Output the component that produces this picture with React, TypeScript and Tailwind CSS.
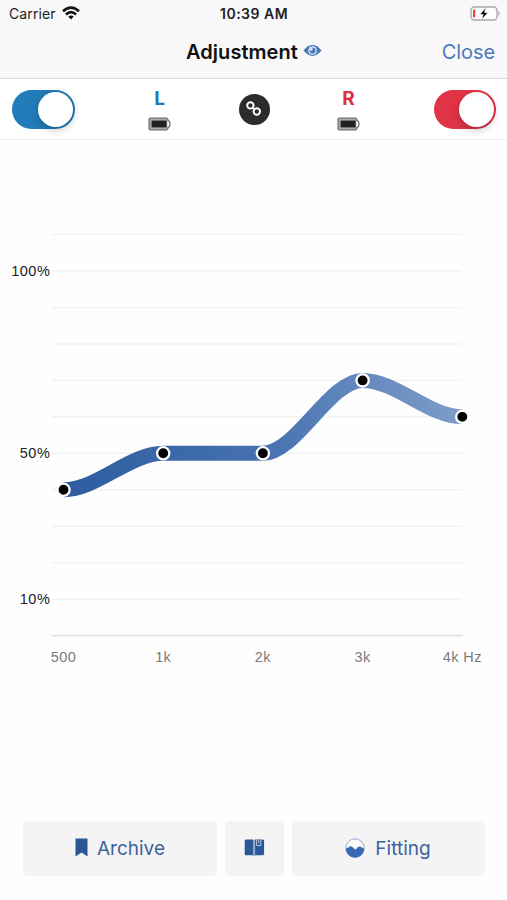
import { useState } from 'react';

interface Point {
  label: string;
  value: number;
}

const POINTS: Point[] = [
  { label: '500', value: 40 },
  { label: '1k', value: 50 },
  { label: '2k', value: 50 },
  { label: '3k', value: 70 },
  { label: '4k Hz', value: 60 },
];

const GRID_VALUES = [110, 100, 90, 80, 70, 60, 50, 40, 30, 20, 10, 0];
const LABELED_VALUES = [100, 50, 10];

const getX = (index: number) => 63.5 + index * 99.7;
const getY = (value: number) => 495.6 - value * 3.646;

// Flat tangents at every point keep the line from overshooting
const getCurve = (points: Point[]) =>
  points
    .map((point, i) => {
      const x = getX(i);
      const y = getY(point.value);
      if (i === 0) return `M${x} ${y}`;
      const prevX = getX(i - 1);
      const third = (x - prevX) / 3;
      return `C${prevX + third} ${getY(points[i - 1].value)} ${x - third} ${y} ${x} ${y}`;
    })
    .join(' ');

function StatusBar() {
  return (
    <div className="relative flex h-7 items-center justify-between pl-[9px] pr-[6px] text-[#222]">
      <div className="flex items-center gap-[6px]">
        <span className="-mt-[2px] text-[14px] tracking-[0.1px]">Carrier</span>
        <svg width="18" height="14" viewBox="0 0 18 14" fill="none" stroke="#111" strokeWidth="2.6" className="-mt-[2px]">
          <path d="M1 5.2Q9 -1.9 17 5.2" />
          <path d="M3.9 8.4Q9 4 14.1 8.4" />
          <path d="M6.3 10.6Q9 8.4 11.7 10.6L9 13.5Z" fill="#111" stroke="none" />
        </svg>
      </div>
      <span className="absolute left-[220px] top-[4px] whitespace-nowrap text-[14px] font-semibold leading-5 tracking-[0.5px]">
        10:39 AM
      </span>
      <svg width="31" height="15" viewBox="0 0 31 15" className="-mt-[2px]">
        <rect x="1" y="1" width="26" height="13" rx="3.5" fill="#fdfdfd" stroke="#a5a5a5" strokeWidth="1.3" />
        <path d="M28.3 5q2.6 2.5 0 5z" fill="#a5a5a5" />
        <rect x="3" y="3.5" width="2.2" height="8" rx="0.8" fill="#f04438" />
        <path d="M15.8 1.5L10 8.5h3.2L12 13.5l5.8-7h-3.3z" fill="#000" stroke="#f9f9f9" strokeWidth="0.6" />
      </svg>
    </div>
  );
}

function NavBar() {
  return (
    <div className="relative flex h-[50px] items-center justify-end pb-[2px] pr-[12px]">
      <div className="absolute left-[186px] flex items-center gap-[5px]">
        <h1 className="text-[20px] font-semibold leading-6 tracking-[0.05px] text-[#111]">Adjustment</h1>
        <svg width="19" height="13" viewBox="0 0 19 13" className="-mt-1">
          <path d="M0.5 6.5Q9.5 -4.3 18.5 6.5Q9.5 17.3 0.5 6.5Z" fill="#4577b9" />
          <circle cx="9.5" cy="6.5" r="4.3" fill="#f0f4f9" />
          <circle cx="9.5" cy="6.5" r="3.1" fill="#4577b9" />
          <path d="M9.5 6.5V3.7A2.8 2.8 0 0 0 6.8 6.5Z" fill="#f0f4f9" />
        </svg>
      </div>
      <button className="text-[20px] leading-6 tracking-[-0.1px] text-[#4c7abd]">Close</button>
    </div>
  );
}

interface ToggleProps {
  on: boolean;
  color: string;
  onToggle: () => void;
}

function Toggle({ on, color, onToggle }: ToggleProps) {
  return (
    <button
      role="switch"
      aria-checked={on}
      onClick={onToggle}
      className={`flex h-[39px] w-[62.5px] items-center rounded-full px-[2px] ${on ? `${color} justify-end` : 'justify-start bg-gray-300'}`}
    >
      <span className="size-[35px] rounded-full bg-white shadow-[0_3px_8px_rgba(0,0,0,0.22)]" />
    </button>
  );
}

function EarStatus({ label, color }: { label: string; color: string }) {
  return (
    <div className="flex w-6 flex-col items-center">
      <span className={`h-[22px] text-[19px] font-bold leading-[22px] ${color}`}>{label}</span>
      <svg width="23" height="14" viewBox="0 0 23 14" className="mt-[7px]">
        <path
          d="M2.5 1H18q2 0 2.2 2.5Q22 4 22 7t-1.8 3.5Q20 13 18 13H2.5Q1 13 1 11.5v-9Q1 1 2.5 1Z"
          fill="#aaa"
          stroke="#666"
          strokeWidth="1.1"
        />
        <path d="M19.3 3.7q2 .8 2 3.3t-2 3.3z" fill="#fff" />
        <rect x="3.6" y="3.6" width="15" height="6.8" fill="#222" />
      </svg>
    </div>
  );
}

function DeviceBar() {
  const [left, setLeft] = useState(true);
  const [right, setRight] = useState(true);

  return (
    <div className="flex h-[61px] items-center justify-between border-b border-[#ededed] bg-white pl-[12px] pr-[11px]">
      <Toggle on={left} color="bg-[#217cb9]" onToggle={() => setLeft(!left)} />
      <div className="flex w-[213px] items-center justify-between">
        <EarStatus label="L" color="text-[#2078b5]" />
        <div className="flex size-[31px] items-center justify-center rounded-full bg-[#2c2c2c]">
          <svg width="18" height="18" viewBox="0 0 18 18" fill="none" stroke="#fff">
            <circle cx="5.4" cy="5.4" r="3.2" strokeWidth="2" />
            <circle cx="11.8" cy="11.5" r="3.2" strokeWidth="2" />
            <path d="M6.6 10.4L10.4 6.4" stroke="#2c2c2c" strokeWidth="0.7" />
            <path d="M7 7L10.2 10" strokeWidth="1.4" />
          </svg>
        </div>
        <EarStatus label="R" color="text-[#dc3142]" />
      </div>
      <Toggle on={right} color="bg-[#e03446]" onToggle={() => setRight(!right)} />
    </div>
  );
}

function Chart() {
  return (
    <svg width="507" height="681" viewBox="0 0 507 681" className="block" fontFamily='"Liberation Sans", Arial, sans-serif'>
      <defs>
        <linearGradient id="curve" gradientUnits="userSpaceOnUse" x1="63" y1="350" x2="462" y2="250">
          <stop offset="0" stopColor="#2d5c9f" />
          <stop offset="0.5" stopColor="#4672b0" />
          <stop offset="1" stopColor="#7f9dc9" />
        </linearGradient>
      </defs>

      {GRID_VALUES.map((value) => (
        <line
          key={value}
          x1="52"
          x2={value === 0 ? 463 : 461.5}
          y1={getY(value)}
          y2={getY(value)}
          stroke={value === 0 ? '#e4e4e4' : '#f2f2f2'}
          strokeWidth={value === 0 ? 1.8 : 1.5}
        />
      ))}

      {LABELED_VALUES.map((value) => (
        <text key={value} x="50.3" y={getY(value) + 4.8} textAnchor="end" fontSize="14.5" letterSpacing="0.5" fill="#222">
          {value}%
        </text>
      ))}

      <path d={getCurve(POINTS)} fill="none" stroke="url(#curve)" strokeWidth="15" />

      {POINTS.map((point, i) => (
        <g key={point.label}>
          <circle cx={getX(i)} cy={getY(point.value)} r="6.1" fill="#000" stroke="#fff" strokeWidth="2.3" />
          <text x={getX(i)} y="522" textAnchor="middle" fontSize="14.5" letterSpacing="0.4" fill="#7b7b7b">
            {point.label}
          </text>
        </g>
      ))}
    </svg>
  );
}

function Footer() {
  const buttonClass = 'flex h-[55px] items-center justify-center rounded-[5px] bg-[#f4f4f4]';

  return (
    <div className="flex gap-[8px] pl-[23px] text-[19px] text-[#3d639e]">
      <button className={`${buttonClass} w-[194px] gap-[9px]`}>
        <svg width="13" height="19" viewBox="0 0 13 19" className="-mt-[2px]">
          <path d="M0.5 0.5h12v18l-6-4-6 4z" fill="#2c5796" />
        </svg>
        <span className="pt-[2px]">Archive</span>
      </button>
      <button aria-label="Notes" className={`${buttonClass} w-[59px]`}>
        <svg width="21" height="18" viewBox="0 0 21 18" className="-mt-[2px]">
          <path d="M2.2 0.5H9V16.3H2.2Q.7 16.3 .7 14.8V2Q.7 .5 2.2 .5Z" fill="#2c5796" />
          <path d="M11 .5H18.6Q20.1.5 20.1 2V14.8Q20.1 16.3 18.6 16.3H11Z" fill="#2c5796" />
          <path d="M9.3 .5l1 1 1-1V16.3l-1.1 1-1-1" fill="#5478aa" />
          <path d="M10.2 1.5V16.5" stroke="#dce4ed" strokeWidth="0.7" />
          <path d="M12.6 .8V6.5H16.8V.8M14.8 .8V4.5" fill="none" stroke="#c7d2e1" strokeWidth="0.9" />
        </svg>
      </button>
      <button className={`${buttonClass} w-[193px] gap-[10px] pr-[1px]`}>
        <svg width="20" height="20" viewBox="0 0 20 20" className="-mt-[2px]">
          <circle cx="10" cy="10" r="9.2" fill="#fafafa" stroke="#7796c4" strokeWidth="0.8" />
          <path d="M.8 10.5Q2 10.5 3.6 9.3Q6 7.3 8 9.5L10.4 11.7L12.5 9.6Q14.5 7.3 16.8 9.4Q18.2 10.5 19.2 10.5A9.2 9.2 0 0 1 .8 10.5Z" fill="#3869b5" />
        </svg>
        <span className="pt-[2px]">Fitting</span>
      </button>
    </div>
  );
}

export default function App() {
  return (
    <div className="h-[900px] w-[507px] overflow-hidden bg-[#fefefe] font-[Inter,sans-serif]">
      <header className="border-b border-[#dcdcdc] bg-[#f8f8f8]">
        <StatusBar />
        <NavBar />
      </header>
      <DeviceBar />
      <Chart />
      <Footer />
    </div>
  );
}
